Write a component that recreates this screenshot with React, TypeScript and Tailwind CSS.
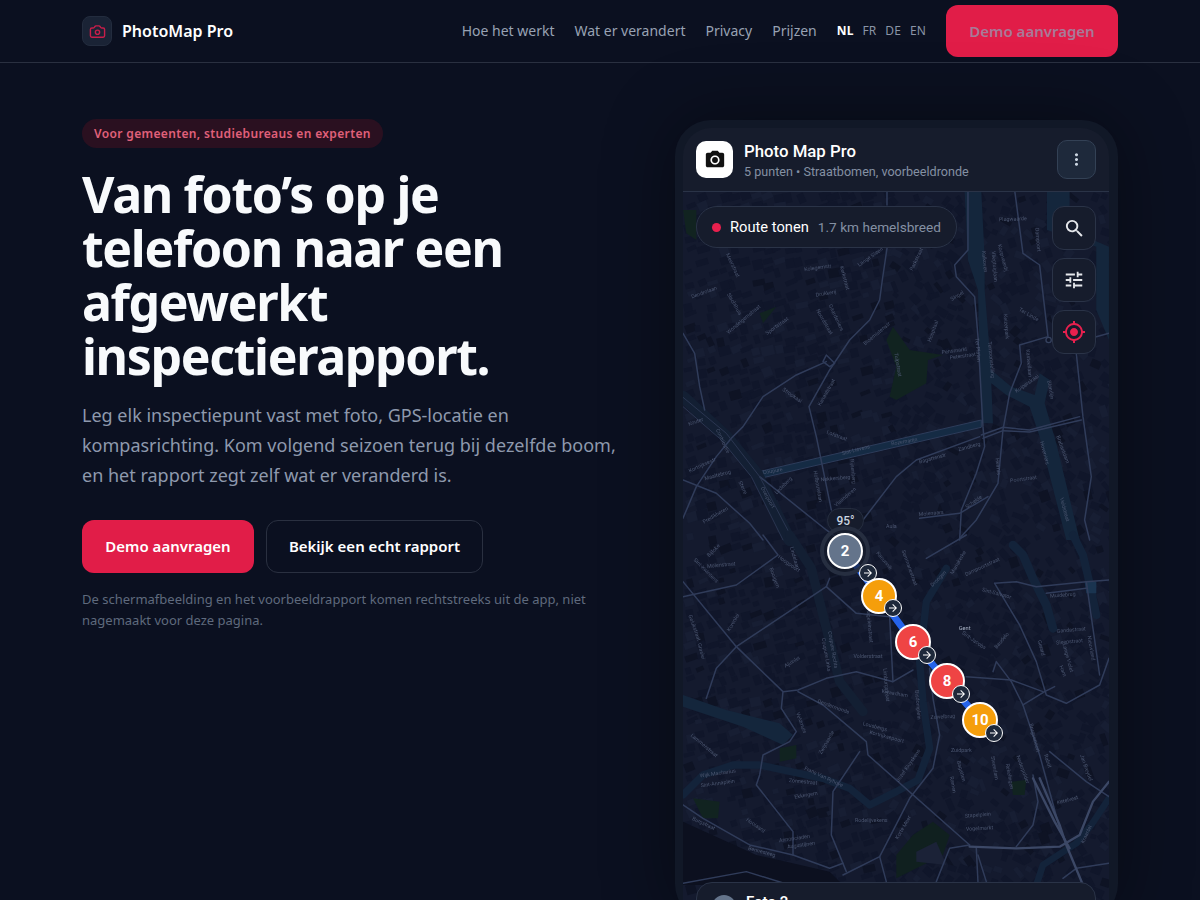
import { Camera } from "lucide-react";
import { MdArrowForward, MdCameraAlt, MdMoreVert, MdMyLocation, MdSearch, MdTune } from "react-icons/md";

const NAV = ["Hoe het werkt", "Wat er verandert", "Privacy", "Prijzen"];

const pins = [
  { n: 2, x: 162, y: 359, c: "bg-[#64748b]", bx: 23, by: 22 },
  { n: 4, x: 196, y: 404, c: "bg-[#f59e0b]", bx: 14, by: 12 },
  { n: 6, x: 230, y: 450, c: "bg-[#ef4444]", bx: 14, by: 13 },
  { n: 8, x: 264, y: 489, c: "bg-[#ef4444]", bx: 14, by: 13 },
  { n: 10, x: 297, y: 528, c: "bg-[#f59e0b]", bx: 14, by: 13 },
];

// coordinates below are in 3x px, same as the crops they were traced from
const topRoads = [
  "M612 175 L598 270 L590 330 L560 390 L500 450 L440 540 L378 650 L400 740 L445 960",
  "M430 515 L340 555 L240 620 L180 710 L145 745 L100 800 L40 890 L0 985",
  "M420 515 L430 495 L455 520 L440 530 Z",
  "M995 0 L1020 190 L1070 225 L1095 440 L1010 465 L1015 520 L980 610 L960 720 L945 880 L880 990 L830 1045",
  "M855 0 L855 180 L815 225 L820 260 L875 320 L885 440 L900 710 L905 770 L880 850 L835 960 L830 1050",
  "M1180 490 L1200 680 L1225 860 L1205 990 L1220 1050",
  "M895 735 L960 712 L1040 720 L1190 680",
  "M900 745 L960 722 L1040 726 L1195 690",
  "M540 990 L640 860 L700 810 L890 740",
  "M230 860 L430 1020 L470 1050",
  "M0 870 L100 910 L200 1000 L240 1050",
  "M0 430 L35 490 L50 590 L65 660",
  "M710 985 L830 970 L915 920",
  "M1240 440 L1278 430",
  "M612 0 L612 45",
];

const bottomRoads = [
  "M440 130 L430 155 L160 335 L100 400 L70 490",
  "M0 140 L160 335 L300 470 L345 465 L430 430 L520 410 L630 440 L690 405",
  "M0 185 L160 150 L285 60 L240 0",
  "M430 155 L520 235 L620 245 L630 440",
  "M345 470 L420 510 L550 620 L555 660 L860 930",
  "M530 650 L450 770 L445 900 L490 1010",
  "M480 1020 L590 965 L680 790 L750 700 L770 600 L750 490 L740 400",
  "M590 965 L610 1040",
  "M0 810 L60 850 L200 930 L330 960 L440 1000 L480 985",
  "M300 470 L295 520 L340 590 L320 620 L240 660 L230 720 L220 750 L330 890 L330 960",
  "M935 145 L1010 270 L1060 380 L1090 480 L1150 505 L1250 450 L1278 370",
  "M935 145 L1000 140 L1060 155 L1210 140 L1278 135",
  "M1090 175 L1210 160",
  "M1210 140 L1250 420",
  "M850 425 L985 435 L1080 470",
  "M985 440 L940 380 L930 410",
  "M1020 510 L1085 470 L1115 455",
  "M985 440 L1020 510 L1070 660 L1130 880",
  "M1050 720 L1065 800 L1050 870 L1000 935",
  "M1278 785 L1210 740 L1100 650",
  "M880 940 L885 1040",
  "M860 930 L800 940 L760 1040",
  "M885 960 L910 1040",
  "M1140 1030 L1180 1000 L1278 985",
  "M730 70 L850 0",
  "M0 1045 L190 1010 L320 1050",
];

const bigRoads = [
  "M860 935 L1000 940 L1130 935 L1190 900 L1230 800 L1278 740",
  "M1070 730 L1130 870 L1150 930 L1200 1050",
  "M1050 730 L1115 860 L1160 940",
];

const topLabels: [string, number, number, number][] = [
  ["Plagwaarde", 990, 92, -2], ["Dampoort", 1060, 150, 85], ["Koopvaardij", 955, 205, 75], ["Vliegtuiglaan", 930, 230, 85],
  ["Kalkoven", 900, 215, 85], ["Kolegemstr", 405, 238, -8], ["Drukkerij", 430, 315, -10], ["Dendrolaan", 65, 312, -20],
  ["Meerstraat", 145, 228, 65], ["Slachthuis", 150, 345, 60], ["Wondelgemstraat", 185, 392, -40], ["Sportstraat", 285, 412, -35],
  ["Kerkstraat", 480, 265, 75], ["Lange Steen", 565, 205, -35], ["Noordstraat", 420, 398, 60], ["Gaardeniers", 455, 385, 65],
  ["Parkstraat", 705, 210, -65], ["Bloemistenstr", 585, 435, -40], ["Tulpstraat", 640, 525, 80], ["Pensmarkt", 815, 487, -8],
  ["Peterstraat", 840, 503, -8], ["Singel", 825, 322, -30], ["Hospitaal", 755, 425, -70], ["Ter Platen", 880, 480, 85],
  ["Tentoonstelling", 920, 510, 85], ["Keizerpark", 965, 410, 85], ["Ter Linde", 1035, 378, 30], ["Kasteellaan", 1033, 520, 85],
  ["Kuiperskaai", 1035, 585, -35], ["Blandijn", 1098, 600, 80], ["Stropkaai", 325, 620, 35], ["Lofstraat", 460, 742, 20],
  ["Kanaalstraat", 435, 610, -60], ["Coupure", 270, 848, -10], ["Contributie", 115, 755, 65], ["Sint-Lievens", 520, 785, -15],
  ["Rozemarijn", 665, 760, -10], ["Zandberg", 860, 775, -15], ["Poortstraat", 1022, 872, -8], ["Bagattenstr", 750, 810, -15],
  ["Hoveniers", 1080, 790, 75], ["Brabantdam", 1135, 780, 70], ["Veldstraat", 1140, 960, 75], ["Kortrijksestr", 60, 830, -25],
  ["Maaltebrug", 105, 860, -15], ["Sterre", 175, 895, 65], ["Ledeberg", 305, 890, -45], ["Overpoort", 250, 925, 60],
  ["Hofbouwlaan", 400, 890, 80], ["Nekkersberg", 458, 870, -5], ["Rijsenberg", 505, 845, 85], ["Vlaanderen", 490, 925, -40],
  ["Heirnis", 940, 830, 85], ["Schelde", 875, 940, -35], ["Molenaars", 745, 975, -5], ["Aula", 625, 1015, 0],
  ["Kouter", 40, 700, -20], ["Predikheren", 100, 980, -30],
];

const bottomLabels: [string, number, number, number][] = [
  ["Molenstraat", 115, 95, -5], ["Bijloke", 95, 50, -45], ["Sint-Kwintens", 65, 110, 45], ["Rooigem", 270, 130, 70],
  ["Hoogpoort", 315, 90, 35], ["Lindelaan", 330, 70, 75], ["Korenlei", 155, 265, -60], ["Gelukstraat", 30, 280, 70],
  ["Graslei", 50, 350, 75], ["Coupure Links", 425, 360, 80], ["Coupure Rechts", 445, 345, 80], ["Ajuinlei", 330, 385, -30],
  ["Mageleinstraat", 555, 270, 85], ["Volderstraat", 555, 370, 0], ["Limburgstraat", 605, 450, 85], ["Kwaadham", 635, 480, 10],
  ["Bisdomplein", 700, 510, 85], ["Dendermonde", 450, 520, 20], ["Lousbergs", 575, 580, 15], ["Kortrijksepoort", 610, 610, 15],
  ["Zwijnaarde", 435, 625, -60], ["Jozef Kluyskens", 680, 695, -55], ["Veldmuis", 350, 565, 70], ["Lammerstraat", 60, 635, 40],
  ["Sint-Annaplein", 105, 750, -8], ["Wijk Macharius", 105, 720, -8], ["Zonnestraat", 360, 745, 5], ["Ekkergem", 370, 785, -10],
  ["Frans Van Ryhove", 420, 730, 25], ["Drongen", 770, 135, -45], ["Seminariestraat", 675, 100, 70], ["Kanunnik", 600, 80, 50],
  ["Dampoortstraat", 900, 100, -25], ["Mariakerke", 830, 85, -60], ["Sint-Salvator", 940, 180, 15], ["Muidebrug", 1140, 185, -5],
  ["Gandastraat", 1165, 290, -5], ["Sleepstraat", 1160, 325, -5], ["Sint-Jacobs", 870, 320, 35], ["Baudelo", 960, 320, -50],
  ["Gerard", 1070, 340, 75], ["Ham", 1135, 410, 70], ["Lange Violet", 1150, 370, 75], ["Nieuwland", 1220, 340, 80],
  ["Brugsepoort", 1050, 610, 75], ["Rabot", 1090, 680, 70], ["Ketelvest", 1155, 800, -15], ["Stapelplein", 885, 845, -5],
  ["Vogelmarkt", 890, 885, -3], ["Zuidpark", 835, 650, 0], ["Bagatten", 830, 710, 75], ["Steendam", 930, 700, 80],
  ["Nederpolder", 1015, 705, 70], ["Rekelingen", 975, 725, 80], ["Ramen", 805, 750, 80], ["Rodelijvekens", 565, 860, 0],
  ["Korte Meer", 665, 880, -60], ["Hooiaard", 215, 875, 35], ["Annonciaden", 335, 915, -8], ["Augustijnen", 355, 935, -8],
  ["Bennesteeg", 235, 955, 15], ["Burgstraat", 60, 870, 25], ["Jan Breydel", 1205, 700, 70], ["Kraanlei", 1215, 900, -65],
  ["Zuivelbrug", 780, 550, -3],
];

// cheap seeded random, the block texture must not change between runs
function makeBlocks() {
  let seed = 4711;
  const r = () => {
    seed = (seed * 16807) % 2147483647;
    return seed / 2147483647;
  };
  const out: { x: number; y: number; w: number; h: number; a: number; f: string }[] = [];
  for (let y = 0; y < 710; y += 11) {
    for (let x = 0; x < 430; x += 11) {
      if (r() < 0.2) continue;
      const v = r();
      out.push({
        x: x + r() * 4,
        y: y + r() * 4,
        w: 5 + r() * 8,
        h: 4 + r() * 6,
        a: x < 200 ? -25 + r() * 15 : 15 + r() * 60,
        f: v < 0.7 ? "#10162a" : v < 0.88 ? "#171e33" : "#0e1324",
      });
    }
  }
  return out;
}

const blocks = makeBlocks();

function MapArt() {
  return (
    <svg width="426" height="708" viewBox="0 0 426 708" className="absolute left-0 top-0 blur-[0.4px]">
      <rect width="426" height="708" fill="#141a2e" />
      {blocks.map((b, i) => (
        <rect key={i} x={b.x} y={b.y} width={b.w} height={b.h} fill={b.f} transform={`rotate(${b.a} ${b.x} ${b.y})`} />
      ))}
      <g transform="translate(0,-2) scale(0.3333)" fill="none" strokeLinejoin="round" strokeLinecap="round">
        {/* parks */}
        <path d="M630 410 L680 480 L780 495 L735 510 L730 580 L640 630 L620 620 L640 530 L610 450 Z" fill="#112320" />
        <path d="M0 60 L40 60 L40 150 L10 130 Z" fill="#112320" />
        <path d="M230 370 L280 350 L240 400 Z" fill="#112320" />
        {/* water */}
        <path d="M845 5 L895 5 L905 200 L905 300 L925 540 L985 590 L1055 615 L1070 550 L1100 570 L1085 640 L1120 760 L1190 1050 L1150 1050 L1070 740 L1040 650 L970 615 L925 580 L930 700 L895 700 L885 300 L855 210 Z" fill="#14263c" />
        <path d="M1092 5 L1160 5 L1160 120 L1278 170 L1278 450 L1240 360 L1240 170 L1092 120 Z" fill="#14263c" />
        <path d="M228 845 L895 690 L895 712 L232 865 Z" fill="#152b44" stroke="#2d3c5a" strokeWidth="3" />
        <path d="M0 620 L130 740 L220 850 L320 1050" stroke="#131f33" strokeWidth="36" />
        {topRoads.map((d) => <path key={d} d={d} stroke="#303c5a" strokeWidth="4.5" />)}
        <path d="M0 622 L130 730 L230 860 L330 1050 M0 650 L115 750 L205 860 L300 1050" stroke="#2a3550" strokeWidth="3" />
        <circle cx="1097" cy="450" r="8" stroke="#35415e" strokeWidth="4" />
        {topLabels.map(([t, x, y, a]) => (
          <text key={t} x={x} y={y} fontSize="16" fill="#4a556f" textAnchor="middle" transform={`rotate(${a} ${x} ${y})`} fontFamily="Roboto, sans-serif">{t}</text>
        ))}
      </g>
      <g transform="translate(0,343) scale(0.3333)" fill="none" strokeLinejoin="round" strokeLinecap="round">
        <path d="M0 860 L220 960 L440 1010 L480 1050 L0 1050 Z" fill="#0c101f" />
        <path d="M30 790 L110 800 L105 850 L60 850 Z" fill="#112320" />
        <path d="M690 900 L750 860 L800 900 L780 960 L640 1030 L640 960 Z" fill="#10201f" />
        <path d="M700 950 L760 920 L790 990 L700 980 Z" fill="#1b2237" />
        <path d="M290 640 L340 630 L340 670 L290 680 Z" fill="#112320" />
        <path d="M985 740 L1030 735 L1025 780 L990 780 Z" fill="#112320" />
        <path d="M0 480 L130 525 L290 565 L330 600 L300 630 L180 575 L0 515 Z" fill="#14263c" />
        <path d="M320 0 L385 100 L425 260 L470 440 L540 530" stroke="#131f33" strokeWidth="28" />
        <path d="M0 780 L60 720 L150 690 L230 690 L420 730 L500 760 L560 810 L640 770 L705 735 L740 640 L720 500 L710 380 L730 200 L790 100" stroke="#13233a" strokeWidth="22" />
        <path d="M990 30 L1020 60 L1050 130 L1090 210 L1110 280" stroke="#13233a" strokeWidth="26" />
        <path d="M1170 0 L1200 60 L1220 145 L1240 240" stroke="#13233a" strokeWidth="24" />
        <path d="M1205 140 L1240 140 L1240 175 L1210 175 Z" fill="#1a3450" />
        <path d="M1060 1050 L1080 990 L1180 925 L1225 870 L1278 790" stroke="#13233a" strokeWidth="20" />
        {bottomRoads.map((d) => <path key={d} d={d} stroke="#303c5a" strokeWidth="4.5" />)}
        {bigRoads.map((d) => <path key={d} d={d} stroke="#3c4866" strokeWidth="7" />)}
        {bottomLabels.map(([t, x, y, a]) => (
          <text key={t} x={x} y={y} fontSize="16" fill="#4a556f" textAnchor="middle" transform={`rotate(${a} ${x} ${y})`} fontFamily="Roboto, sans-serif">{t}</text>
        ))}
        <text x="845" y="285" fontSize="17" fill="#aab4c6" textAnchor="middle" fontFamily="Roboto, sans-serif">Gent</text>
      </g>
      <path d="M162 359 L196 404 L230 450 L264 489 L297 528" fill="none" stroke="#2563eb" strokeWidth="7" />
    </svg>
  );
}

function Pin({ n, x, y, c, bx, by }: { n: number; x: number; y: number; c: string; bx: number; by: number }) {
  return (
    <div className="absolute" style={{ left: x, top: y }}>
      {n === 2 && <div className="absolute -left-[25px] -top-[25px] h-[50px] w-[50px] rounded-full border-[4px] border-[#262e40] bg-[#161c2c]/70" />}
      <div className={`absolute -left-[18px] -top-[18px] flex h-[36px] w-[36px] items-center justify-center rounded-full border-2 border-white text-[15px] font-bold text-white ${c}`}>{n}</div>
      <div className="absolute flex h-[18px] w-[18px] -translate-x-1/2 -translate-y-1/2 items-center justify-center rounded-full border border-white bg-[#1e293b]" style={{ left: bx, top: by }}>
        <MdArrowForward size={12} color="white" />
      </div>
    </div>
  );
}

function MapButton({ children }: { children: React.ReactNode }) {
  return <div className="flex h-[44px] w-[44px] items-center justify-center rounded-xl border border-[#2a3347] bg-[#161c2c]">{children}</div>;
}

export default function App() {
  return (
    <div className="h-[900px] overflow-hidden bg-[#0b1020] font-['Noto_Sans',sans-serif] text-white">
      <header className="flex h-[63px] items-center justify-between border-b border-[#2a3040] px-[82px]">
        <div className="flex items-center gap-[10px]">
          <div className="flex h-[30px] w-[30px] items-center justify-center rounded-lg border border-[#232c3e] bg-[#1a2335]"><Camera size={17} color="#c81e4a" /></div>
          <span className="text-base font-semibold">PhotoMap Pro</span>
        </div>
        <div className="flex items-center">
          <nav className="flex gap-5 text-sm text-[#98a2b3]">{NAV.map((n) => <span key={n}>{n}</span>)}</nav>
          <div className="ml-5 flex gap-[9px] text-xs tracking-[0.1px] text-[#8a94a6]"><b className="text-white">NL</b><span>FR</span><span>DE</span><span>EN</span></div>
          <div className="ml-5 flex h-[52px] w-[172px] items-center justify-center rounded-xl bg-[#e11d48] text-[15px] font-semibold text-[#a87a98]">Demo aanvragen</div>
        </div>
      </header>
      <main className="flex justify-between pl-[82px] pr-[82px] pt-[56px]">
        <div className="w-[540px]">
          <span className="inline-block rounded-full bg-[#2a1020] px-3 py-[6.5px] text-xs font-semibold tracking-[0.36px] text-[#e0607a]">Voor gemeenten, studiebureaus en experten</span>
          <h1 className="mt-[19px] text-[50px] font-bold leading-[54px] tracking-[-1.35px] text-[#f8fafc]">Van foto’s op je telefoon naar een afgewerkt inspectierapport.</h1>
          <p className="mt-[17px] text-lg leading-[30px] text-[#8e99ad]">Leg elk inspectiepunt vast met foto, GPS-locatie en kompasrichting. Kom volgend seizoen terug bij dezelfde boom, en het rapport zegt zelf wat er veranderd is.</p>
          <div className="mt-[30px] flex gap-3">
            <div className="flex h-[53px] w-[172px] items-center justify-center rounded-xl bg-[#e11d48] text-[15px] font-semibold">Demo aanvragen</div>
            <div className="flex h-[53px] w-[217px] items-center justify-center rounded-xl border border-[#2a3040] text-[15px] font-semibold">Bekijk een echt rapport</div>
          </div>
          <p className="mt-4 text-[13px] leading-[21px] text-[#5f6a7d]">De schermafbeelding en het voorbeeldrapport komen rechtstreeks uit de app, niet nagemaakt voor deze pagina.</p>
        </div>
        <div className="mt-px h-[800px] w-[443px] rounded-[36px] bg-[#111827] pl-2 pt-2 font-['Roboto',sans-serif] shadow-[0_0_70px_rgba(0,0,0,0.4)]">
          <div className="w-[426px] overflow-hidden rounded-t-[28px]">
            <div className="flex h-[64px] items-center gap-[11px] border-b border-[#2a3347] bg-[#161c2c] pl-[13px] pr-[13px]">
              <div className="flex h-[37px] w-[37px] items-center justify-center rounded-[10px] bg-white"><MdCameraAlt size={22} color="#111" /></div>
              <div className="flex-1 pt-[2px] leading-tight">
                <div className="text-[16.8px] font-medium">Photo Map Pro</div>
                <div className="mt-[2px] text-[12.6px] text-[#8490a3]">5 punten • Straatbomen, voorbeeldronde</div>
              </div>
              <div className="flex h-[39px] w-[39px] items-center justify-center rounded-[10px] border border-[#334155] bg-[#1e293b]"><MdMoreVert size={19} color="#cbd5e1" /></div>
            </div>
            <div className="relative h-[720px] overflow-hidden">
              <MapArt />
              <div className="absolute left-[13px] top-[14px] flex h-[42px] w-[261px] items-center rounded-full border border-[#2a3347] bg-[#161c2c] pl-[15px] text-[14.7px]">
                <i className="mr-[9px] h-[9px] w-[9px] rounded-full bg-[#e8204e]" />Route tonen<span className="ml-[9px] text-[13.65px] text-[#8490a3]">1.7 km hemelsbreed</span>
              </div>
              <div className="absolute right-[13px] top-[14px] flex flex-col gap-[8px]">
                <MapButton><MdSearch size={23} color="#e5e7eb" /></MapButton>
                <MapButton><MdTune size={22} color="#e5e7eb" /></MapButton>
                <MapButton><MdMyLocation size={24} color="#e8204e" /></MapButton>
              </div>
              <div className="absolute left-[144px] top-[316px] flex h-[25px] w-[37px] items-center justify-center rounded-full border border-[#252d3f] bg-[#161c2c] text-xs font-medium text-[#cbd5e1]">95°</div>
              {pins.map((p) => <Pin key={p.n} {...p} />)}
              <div className="absolute left-[13px] top-[690px] flex w-[400px] gap-[10px] rounded-t-2xl border border-[#2a3347] bg-[#161c2c] pl-[15px] pt-[8px]">
                <i className="mt-[4px] h-6 w-6 rounded-full bg-[#64748b]" />
                <span className="text-[15px] font-semibold">Foto 2</span>
              </div>
            </div>
          </div>
        </div>
      </main>
    </div>
  );
}
